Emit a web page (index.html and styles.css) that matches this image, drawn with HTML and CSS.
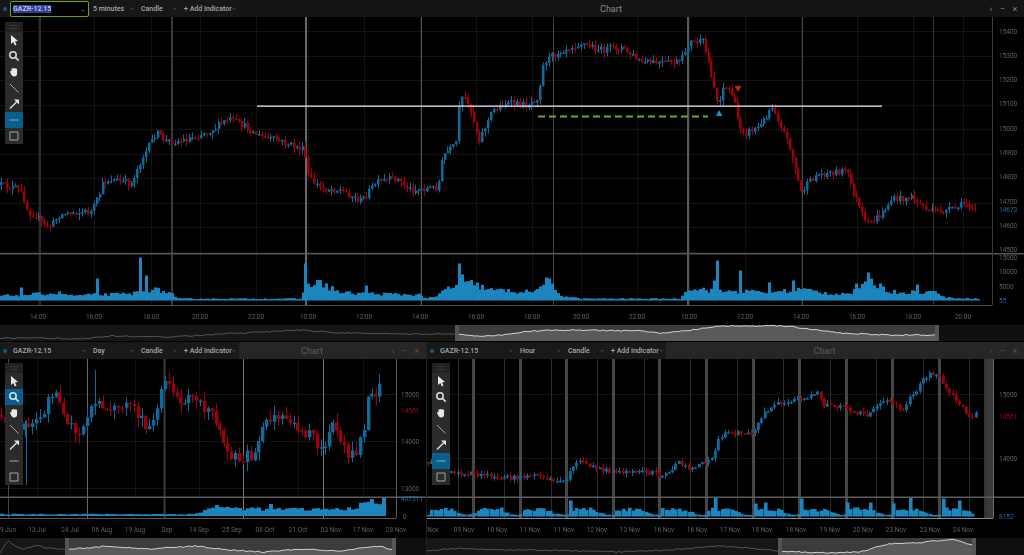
FILE: index.html
```html
<!DOCTYPE html>
<html>
  <head>
    <title>Chart</title>
    <link rel="stylesheet" href="styles.css">
  </head>
  <body>
    <div class="window window-main">
      <div class="titlebar">
        <div class="group">
          <span class="dot"></span>
          <div class="cell symbol focused"><span class="selected">GAZR-12.15</span></div>
          <div class="cell period">5 minutes</div>
          <div class="cell kind">Candle</div>
          <div class="cell add">+ Add Indicator</div>
        </div>
        <div class="title">Chart</div>
        <div class="controls"><span>&lsaquo;</span><span>&minus;</span><span>&times;</span></div>
      </div>
      <div class="chart">
        <svg id="chart-main" viewBox="0 17 1024 307"></svg>
        <div class="toolbar" data-active="5"></div>
      </div>
      <svg class="nav" id="nav-main" viewBox="0 324 1024 17"></svg>
    </div>

    <div class="bottom">
      <div class="window window-left">
        <div class="titlebar">
          <div class="group">
            <span class="dot"></span>
            <div class="cell symbol">GAZR-12.15</div>
            <div class="cell period">Day</div>
            <div class="cell kind">Candle</div>
            <div class="cell add">+ Add Indicator</div>
          </div>
          <div class="title">Chart</div>
          <div class="controls"><span>&lsaquo;</span><span>&minus;</span><span>&times;</span></div>
        </div>
        <div class="chart">
          <svg id="chart-left" viewBox="0 359 426 178"></svg>
          <div class="toolbar" data-active="1"></div>
        </div>
        <svg class="nav" id="nav-left" viewBox="0 537 426 18"></svg>
      </div>

      <div class="window window-right">
        <div class="titlebar">
          <div class="group">
            <span class="dot"></span>
            <div class="cell symbol">GAZR-12.15</div>
            <div class="cell period">Hour</div>
            <div class="cell kind">Candle</div>
            <div class="cell add">+ Add Indicator</div>
          </div>
          <div class="title">Chart</div>
          <div class="controls"><span>&lsaquo;</span><span>&minus;</span><span>&times;</span></div>
        </div>
        <div class="chart">
          <svg id="chart-right" viewBox="427 359 597 178"></svg>
          <div class="toolbar" data-active="5"></div>
        </div>
        <svg class="nav" id="nav-right" viewBox="427 537 597 18"></svg>
      </div>
    </div>

    <template id="toolbar-icons">
      <div class="grip"><span></span></div>
      <div class="tool"><svg viewBox="0 0 16 16"><path class="solid" d="M5 3v9l2.3-2 1.6 3.4 1.6-.7-1.5-3.3 3-.3z"/></svg></div>
      <div class="tool"><svg viewBox="0 0 16 16"><circle class="thick" cx="7" cy="7" r="3.2"/><path class="thick" d="M9.4 9.4l3.3 3.2"/></svg></div>
      <div class="tool"><svg viewBox="0 0 16 16"><path class="solid" d="M4.2 8.2c-.6-1 .7-1.6 1.3-.7V4.8c0-.9 1.2-.9 1.3 0-.1-1.2 1.5-1.2 1.5 0 .1-1 1.4-.9 1.400.1.3-.7 1.400-.5 1.400.4v4.500c0 1.500-1 2.700-2.600 2.700H8c-1.700 0-2.200-1.200-3-2.500z"/></svg></div>
      <div class="tool"><svg viewBox="0 0 16 16"><path class="thin" d="M4 4l8.500 8.500"/></svg></div>
      <div class="tool"><svg viewBox="0 0 16 16"><path class="thick" d="M4 12.500l6.500-6.500"/><path class="solid" d="M13 3.500v5l-5-5z"/></svg></div>
      <div class="tool"><svg viewBox="0 0 16 16"><path class="thin" d="M3.500 8h9"/></svg></div>
      <div class="tool"><svg viewBox="0 0 16 16"><path class="thin" d="M4 4h8v8H4z"/></svg></div>
    </template>

    <script src="chart.js"></script>
  </body>
</html>
```

FILE: styles.css
```css
* {
  box-sizing: border-box;
}
body {
  margin: 0;
  width: 1024px;
  height: 555px;
  overflow: hidden;
  background-color: #000;
  font-family: Roboto, "Liberation Sans", sans-serif;
}
.window {
  display: flex;
  flex-direction: column;
  background-color: #000;
}
.window-main {
  height: 341px;
  margin-bottom: 1px;
}
.bottom {
  display: flex;
  gap: 1px;
  height: 213px;
  background-color: #222;
}
.window-left {
  width: 426px;
}
.window-right {
  flex: 1;
}
.titlebar {
  display: flex;
  align-items: stretch;
  height: 17px;
  flex: none;
  background-color: #262626;
}
.window-main .titlebar {
  background-color: #141414;
}
.group {
  display: flex;
  align-items: center;
  background-color: #191919;
  color: #a8a8a8;
  font-size: 7px;
  font-weight: 500;
}
.window-main .group {
  background-color: #171717;
}
.dot {
  width: 4px;
  height: 4px;
  margin: 0 3px;
  border-radius: 50%;
  background-color: #0d5f8c;
}
.cell {
  position: relative;
  display: flex;
  align-items: center;
  height: 100%;
}
.cell::after {
  content: "";
  position: absolute;
  right: 3px;
  top: 8px;
  border-left: 2px solid transparent;
  border-right: 2px solid transparent;
  border-top: 2px solid #3c3c3c;
}
.symbol {
  width: 79px;
  padding-left: 3px;
}
.focused {
  height: 16px;
  border: 1px solid #6ca31c;
  border-radius: 2px;
  background-color: #000;
  padding-left: 2px;
}
.selected {
  background-color: #2f3f97;
  color: #c9cfe8;
}
.period {
  width: 48px;
  padding-left: 4px;
}
.kind {
  width: 43px;
  padding-left: 4px;
}
.add {
  width: 59px;
  padding-left: 4px;
}
.title {
  flex: 1;
  align-self: center;
  text-align: center;
  font-size: 9px;
  color: #8a8a8a;
}
.window-left .title,
.window-right .title {
  color: #5c5c5c;
}
.controls {
  display: flex;
  width: 41px;
  align-items: center;
  justify-content: space-around;
  padding: 0 3px;
  font-size: 9px;
  color: #888;
}
.window-left .controls,
.window-right .controls {
  color: #555;
}
.chart {
  position: relative;
  flex: 1;
  min-height: 0;
}
.chart > svg {
  display: block;
  width: 100%;
  height: 100%;
  filter: blur(0.3px);
}
.nav {
  display: block;
  flex: none;
  width: 100%;
  height: 17px;
  filter: blur(0.3px);
}
.bottom .nav {
  height: 18px;
}
.toolbar {
  position: absolute;
  left: 5px;
  top: 5px;
  width: 18px;
  background-color: #2b2b2b;
}
.bottom .toolbar {
  top: 4px;
}
.grip {
  display: flex;
  height: 10px;
  align-items: center;
  justify-content: center;
  background-color: #222;
}
.grip span {
  width: 8px;
  height: 4px;
  border-top: 1px solid #363636;
  border-bottom: 1px solid #363636;
}
.tool {
  display: flex;
  height: 16px;
  align-items: center;
  justify-content: center;
}
.tool svg {
  width: 16px;
  height: 16px;
}
.tool.on {
  background-color: #07608f;
}
.solid {
  fill: #e8e8e8;
}
.thick {
  fill: none;
  stroke: #dedede;
  stroke-width: 1.500;
}
.thin {
  fill: none;
  stroke: #a4a4a4;
  stroke-width: 1;
}
.lbl {
  font-size: 6.500px;
  fill: #606060;
}
.lbl-red {
  fill: #a00c14;
}
.lbl-blue {
  fill: #1c6f9e;
}
```

FILE: chart.js
```js
// seeded so the picture comes out the same on every load
let seed = 12345;
function rand() {
  seed = (seed * 16807) % 2147483647;
  return seed / 2147483647;
}

function interp(keys, x) {
  for (let i = 1; i < keys.length; i++) {
    if (x <= keys[i][0]) {
      const a = keys[i - 1];
      const b = keys[i];
      return a[1] + ((b[1] - a[1]) * (x - a[0])) / (b[0] - a[0]);
    }
  }
  return keys[keys.length - 1][1];
}

function rect(x, y, w, h, color) {
  return `<rect x="${x}" y="${y}" width="${w}" height="${h}" fill="${color}"/>`;
}

function hline(y, x1, x2, color, size) {
  return rect(x1, y, x2 - x1, size || 1, color);
}

function vline(x, y1, y2, color, size) {
  return rect(x, y1, size || 1, y2 - y1, color);
}

function label(x, y, text, cls, anchor) {
  return `<text class="lbl ${cls || ""}" x="${x}" y="${y}" text-anchor="${anchor || "start"}">${text}</text>`;
}

function candles(keys, step, width, noise) {
  const up = "#0c6a9c";
  const down = "#9c000c";
  const start = keys[0][0];
  const end = keys[keys.length - 1][0];
  let out = "";
  let open = keys[0][1];
  for (let x = start; x <= end; x += step) {
    const close = interp(keys, x) + (rand() - 0.5) * noise;
    const top = Math.min(open, close);
    const bottom = Math.max(open, close);
    const color = close < open ? up : down;
    const wickTop = top - rand() * noise * 0.8;
    const wickBottom = bottom + rand() * noise * 0.8;
    const mid = Math.round(x + width / 2 - 0.5);
    out += vline(mid, wickTop, wickBottom, color);
    out += rect(Math.round(x), top, width, Math.max(bottom - top, 1.5), color);
    open = close;
  }
  return out;
}

function volumes(keys, spikes, step, width, base, end) {
  const color = "#1d85bd";
  let out = "";
  for (let x = keys[0][0]; x <= end; x += step) {
    let h = interp(keys, x) * (0.7 + rand() * 0.5);
    for (const s of spikes) {
      if (Math.abs(s[0] - x) <= step / 2) h = s[1];
    }
    h = Math.max(h, 1);
    out += rect(Math.round(x), base - h, width, h, color);
  }
  return out;
}

// the overview line wiggles a little between the key points
function wiggle(keys) {
  const pts = [];
  for (let x = keys[0][0]; x < keys[keys.length - 1][0]; x += 3) {
    pts.push([x, interp(keys, x) + (rand() - 0.5) * 1.2]);
  }
  pts.push(keys[keys.length - 1]);
  return pts;
}

function drawNav(id, size, sel, keys, end) {
  const y1 = size.top;
  const h = size.height;
  const pts = wiggle(keys);
  const inSel = pts.filter((k) => k[0] >= sel[0] && k[0] <= sel[1]);
  const outer = pts.filter((k) => k[0] <= sel[0] + 1);
  const line = (p) => p.map((q) => q[0] + "," + q[1]).join(" ");
  let out = rect(size.left, y1, size.width, h, "#161616");
  out += rect(sel[0], y1, sel[1] - sel[0], h, "#3c3c3c");
  const area = [[sel[0], y1 + h]].concat(inSel, [[sel[1], inSel[inSel.length - 1][1]], [sel[1], y1 + h]]);
  out += `<polygon points="${line(area)}" fill="#5a5a5a"/>`;
  out += `<polyline points="${line(inSel)}" fill="none" stroke="#cfcfcf" stroke-width="1"/>`;
  out += `<polyline points="${line(outer)}" fill="none" stroke="#525252" stroke-width="1"/>`;
  out += rect(sel[0], y1, 4, h, "#555");
  out += rect(sel[1] - 4, y1, 4, h, "#555");
  if (end) out += rect(end, y1, size.left + size.width - end, h, "#101010");
  document.getElementById(id).innerHTML = out;
}

function drawMain() {
  let out = "";
  const prices = ["15400", "15300", "15200", "15100", "15000", "14900", "14800", "14700", "14600", "14500"];
  const times = [
    [38, "14:00"], [94, "16:00"], [151, "18:00"], [200, "20:00"], [256, "22:00"], [308, "10:00"],
    [364, "12:00"], [420, "14:00"], [476, "16:00"], [532, "18:00"], [581, "20:00"], [637, "22:00"],
    [689, "10:00"], [745, "12:00"], [801, "14:00"], [857, "16:00"], [913, "18:00"], [963, "20:00"],
  ];

  prices.forEach((p, i) => {
    out += hline(Math.round(31 + i * 24.5), 0, 992, "#131313");
  });
  times.forEach((t) => {
    out += vline(t[0], 17, 305, "#121212");
  });

  const sessions = [
    [39, "#2c2c2c", 2], [171, "#3a3a3a", 2], [305, "#6a6a6a", 2], [421, "#555", 1],
    [553, "#454545", 1], [687, "#5a5a5a", 2], [802, "#484848", 1], [933, "#353535", 1],
  ];
  sessions.forEach((s) => {
    out += vline(s[0], 17, 305, s[1], s[2]);
  });

  out += candles([
    [0, 185], [15, 188], [22, 195], [27, 212], [35, 215], [42, 225], [50, 226], [58, 215], [70, 212], [90, 212],
    [97, 198], [102, 183], [110, 179], [130, 184], [140, 160], [147, 148], [155, 132], [165, 141], [180, 141],
    [195, 136], [210, 130], [228, 119], [245, 127], [258, 136], [275, 140], [290, 145], [303, 150], [308, 178],
    [320, 188], [340, 190], [360, 201], [375, 183], [395, 178], [410, 190], [437, 187], [442, 155], [455, 145],
    [459, 100], [466, 98], [472, 118], [478, 140], [485, 125], [492, 110], [505, 103], [525, 105], [537, 97],
    [543, 62], [560, 50], [580, 43], [600, 50], [620, 47], [640, 62], [655, 63], [680, 62], [688, 42],
    [702, 42], [712, 80], [717, 105], [722, 87], [730, 90], [738, 125], [745, 133], [760, 125], [771, 105],
    [780, 125], [790, 150], [800, 192], [815, 175], [845, 170], [850, 185], [865, 225], [880, 215], [890, 200],
    [910, 197], [930, 212], [950, 210], [965, 203], [977, 209],
  ], 2.9, 2.5, 7);

  const volKeys = [
    [0, 5], [40, 7], [60, 8], [70, 5], [90, 6], [130, 7], [150, 12], [170, 8], [175, 2], [300, 2],
    [305, 18], [320, 18], [340, 8], [420, 6], [425, 2], [435, 4], [445, 13], [470, 18], [490, 11], [530, 9],
    [550, 16], [560, 5], [580, 2], [680, 2], [687, 14], [700, 12], [720, 10], [770, 9], [800, 12], [830, 7],
    [850, 8], [870, 20], [890, 9], [935, 9], [945, 3], [978, 2],
  ];
  const volSpikes = [
    [19, 13], [97, 22], [140, 43], [145, 25], [305, 37], [365, 15], [458, 37], [462, 26], [540, 14], [545, 23],
    [549, 22], [716, 40], [712, 20], [739, 30], [768, 18], [792, 20], [855, 17], [868, 28], [915, 16],
  ];
  out += volumes(volKeys, volSpikes, 2.9, 3, 300.5, 978);

  out += hline(253, 0, 1024, "#555", 1.5);
  out += hline(305, 0, 992, "#4a4a4a");
  out += vline(992, 17, 305, "#3c3c3c");

  out += hline(105.5, 257, 882, "#e4e4e4", 1.3);
  out += `<line x1="538" y1="116.500" x2="708" y2="116.500" stroke="#6da82a" stroke-width="2" stroke-dasharray="7 4"/>`;
  out += `<polygon points="719,110 716,116 722.500,116" fill="#1e90d0"/>`;
  out += `<polygon points="734.500,86 741.500,86 738,92" fill="#c22020"/>`;

  prices.forEach((p, i) => {
    out += label(999, 33.5 + i * 24.3, p);
  });
  out += label(999, 211.500, "14673", "lbl-blue");
  out += label(999, 259.5, "15000");
  out += label(999, 274, "10000");
  out += label(999, 288.500, "5000");
  out += label(999, 303, "55", "lbl-blue");
  times.forEach((t) => {
    out += label(t[0], 318.500, t[1], "", "middle");
  });

  document.getElementById("chart-main").innerHTML = out;
}

function drawLeft() {
  let out = "";
  const times = [
    [8, "9 Jun"], [37, "13 Jul"], [70, "24 Jul"], [102, "06 Aug"], [135, "19 Aug"], [167, "Sep"], [199, "14 Sep"],
    [232, "25 Sep"], [265, "08 Oct"], [298, "21 Oct"], [331, "03 Nov"], [363, "17 Nov"], [396, "28 Nov"],
  ];
  [394, 441, 488].forEach((y) => {
    out += hline(y, 0, 396, "#141414");
  });
  [37, 70, 135, 199, 298, 363].forEach((x) => {
    out += vline(x, 359, 497, "#101010");
  });
  out += vline(8, 359, 518, "#444");
  out += vline(87, 359, 518, "#6a6a6a");
  out += vline(163.500, 359, 518, "#3a3a3a", 2);
  out += vline(243, 359, 518, "#787878");
  out += vline(323, 359, 518, "#787878");

  out += vline(26, 420, 485, "#0f6c9f");
  out += vline(95, 370, 415, "#0c6a9c");
  out += candles([
    [0, 415], [3, 425], [28, 425], [34, 420], [42, 413], [46, 403], [50, 395], [52, 392], [58, 405], [62, 410],
    [66, 420], [70, 427], [75, 435], [78, 437], [82, 420], [88, 408], [92, 407], [100, 405], [108, 410], [116, 410],
    [120, 403], [128, 400], [132, 403], [137, 413], [143, 423], [146, 440], [150, 417], [155, 410], [160, 393],
    [163, 384], [170, 392], [178, 400], [186, 398], [195, 405], [205, 407], [213, 412], [215, 423], [220, 432],
    [225, 445], [230, 455], [237, 462], [243, 455], [250, 458], [254, 445], [260, 430], [267, 422], [272, 418],
    [277, 422], [283, 415], [290, 425], [297, 432], [307, 433], [315, 442], [323, 452], [330, 422], [337, 432],
    [343, 450], [350, 457], [358, 445], [363, 423], [367, 397], [373, 398], [378, 383], [381, 408],
  ], 3.9, 3.4, 12);

  out += volumes([
    [0, 2], [192, 2], [200, 4], [205, 9], [240, 8], [300, 7], [340, 7], [355, 10], [370, 14], [383, 15],
  ], [[213, 11], [268, 12], [370, 17], [381, 18]], 3.9, 4, 516, 383);

  out += hline(496.500, 0, 426, "#5c5c5c", 1.5);
  out += hline(518, 0, 396, "#5a5a5a");
  out += vline(396, 359, 518, "#5a5a5a");

  out += label(401, 396.500, "15000");
  out += label(401, 412.500, "14561", "lbl-red");
  out += label(401, 443.500, "14000");
  out += label(401, 490.500, "13000");
  out += label(401, 500.500, "407511", "lbl-blue");
  out += label(403, 519, "0");
  times.forEach((t) => {
    out += label(t[0], 531.500, t[1], "", "middle");
  });
  document.getElementById("chart-left").innerHTML = out;
}

function drawRight() {
  let out = "";
  const times = [
    [433, "Nov"], [464, "09 Nov"], [497, "10 Nov"], [530, "11 Nov"], [564, "11 Nov"], [597, "12 Nov"],
    [630, "13 Nov"], [664, "16 Nov"], [697, "16 Nov"], [730, "17 Nov"], [762, "18 Nov"], [796, "18 Nov"],
    [830, "19 Nov"], [863, "20 Nov"], [896, "23 Nov"], [930, "23 Nov"], [963, "24 Nov"],
  ];
  [394, 458].forEach((y) => {
    out += hline(y, 427, 993, "#141414");
  });
  for (let i = 0; i < 11; i++) {
    out += vline(Math.round(472 + i * 46.6), 359, 518, "#464646", 3);
    out += vline(Math.round(457.5 + i * 46.5), 359, 518, "#2c2c2c");
  }
  out += vline(969, 359, 518, "#2c2c2c");
  out += rect(984, 359, 3, 159, "#333");
  out += rect(987, 359, 6, 159, "#3a3a3a");

  out += candles([
    [427, 462], [440, 466], [450, 472], [460, 473], [480, 474], [510, 478], [540, 476], [555, 482], [565, 483],
    [570, 467], [580, 461], [595, 468], [610, 471], [630, 472], [650, 473], [660, 475], [670, 470], [677, 462],
    [690, 468], [705, 462], [712, 457], [716, 440], [727, 432], [750, 435], [756, 428], [762, 412], [768, 408],
    [780, 402], [790, 400], [800, 398], [810, 395], [818, 392], [822, 405], [830, 406], [845, 408], [855, 413],
    [866, 415], [870, 410], [878, 403], [888, 399], [895, 405], [900, 410], [905, 405], [910, 395], [917, 388],
    [925, 376], [930, 372], [940, 378], [945, 390], [950, 395], [960, 405], [965, 415], [975, 415],
  ], 3.3, 2.8, 5);

  // volume falls off inside each session, so it is worked out from the session start
  const volKeys = [];
  for (let i = -2; i < 12; i++) {
    const start = 472.7 + i * 46.6;
    volKeys.push([start, 2], [start + 1, 8], [start + 24, 7], [start + 38, 2]);
  }
  volKeys[0][0] = 427;
  const volSpikes = [
    [570, 16], [500, 9], [590, 9], [713, 19], [754, 13], [764, 14], [800, 18],
    [847, 14], [870, 14], [892, 13], [909, 19], [942, 18], [959, 16],
  ];
  out += volumes(volKeys.filter((k) => k[0] >= 427), volSpikes, 3.3, 3.6, 516.5, 974);

  out += hline(496.500, 427, 1024, "#5c5c5c", 1.5);
  out += hline(518, 427, 993, "#8a8a8a");
  out += vline(993, 359, 518, "#6a6a6a");

  out += label(999, 396.500, "15000");
  out += label(999, 418.500, "14561", "lbl-red");
  out += label(999, 460.500, "14000");
  out += label(999, 518.500, "8152", "lbl-blue");
  times.forEach((t) => {
    out += label(t[0], 531.500, t[1], "", "middle");
  });
  document.getElementById("chart-right").innerHTML = out;
}

document.querySelectorAll(".toolbar").forEach((bar) => {
  bar.appendChild(document.getElementById("toolbar-icons").content.cloneNode(true));
  bar.querySelectorAll(".tool")[Number(bar.dataset.active)].classList.add("on");
});

drawMain();
drawLeft();
drawRight();

drawNav("nav-main", { left: 0, top: 325, width: 1024, height: 16 }, [455, 939], [
  [0, 338], [40, 338], [80, 339], [110, 336], [170, 337], [240, 333], [300, 330], [340, 333], [400, 334], [455, 334],
  [480, 336], [500, 335], [530, 331], [570, 330], [640, 331], [660, 333], [684, 331], [720, 326], [790, 326],
  [800, 328], [840, 333], [890, 335], [930, 335], [939, 335],
], 939);

drawNav("nav-left", { left: 0, top: 538, width: 426, height: 17 }, [65, 396], [
  [0, 553], [8, 540], [14, 546], [25, 549], [35, 545], [45, 548], [65, 549], [90, 548], [105, 546], [130, 548],
  [150, 549], [195, 546], [230, 550], [265, 552], [300, 549], [340, 551], [365, 547], [382, 546], [386, 549], [396, 549],
], 396);

drawNav("nav-right", { left: 427, top: 538, width: 597, height: 17 }, [778, 976], [
  [427, 551], [460, 548], [490, 550], [530, 550], [580, 551], [620, 552], [670, 550], [720, 546], [760, 549], [778, 551],
  [827, 553], [860, 552], [877, 547], [894, 543], [917, 543], [934, 541], [952, 539], [971, 545], [976, 545],
], 976);
```
